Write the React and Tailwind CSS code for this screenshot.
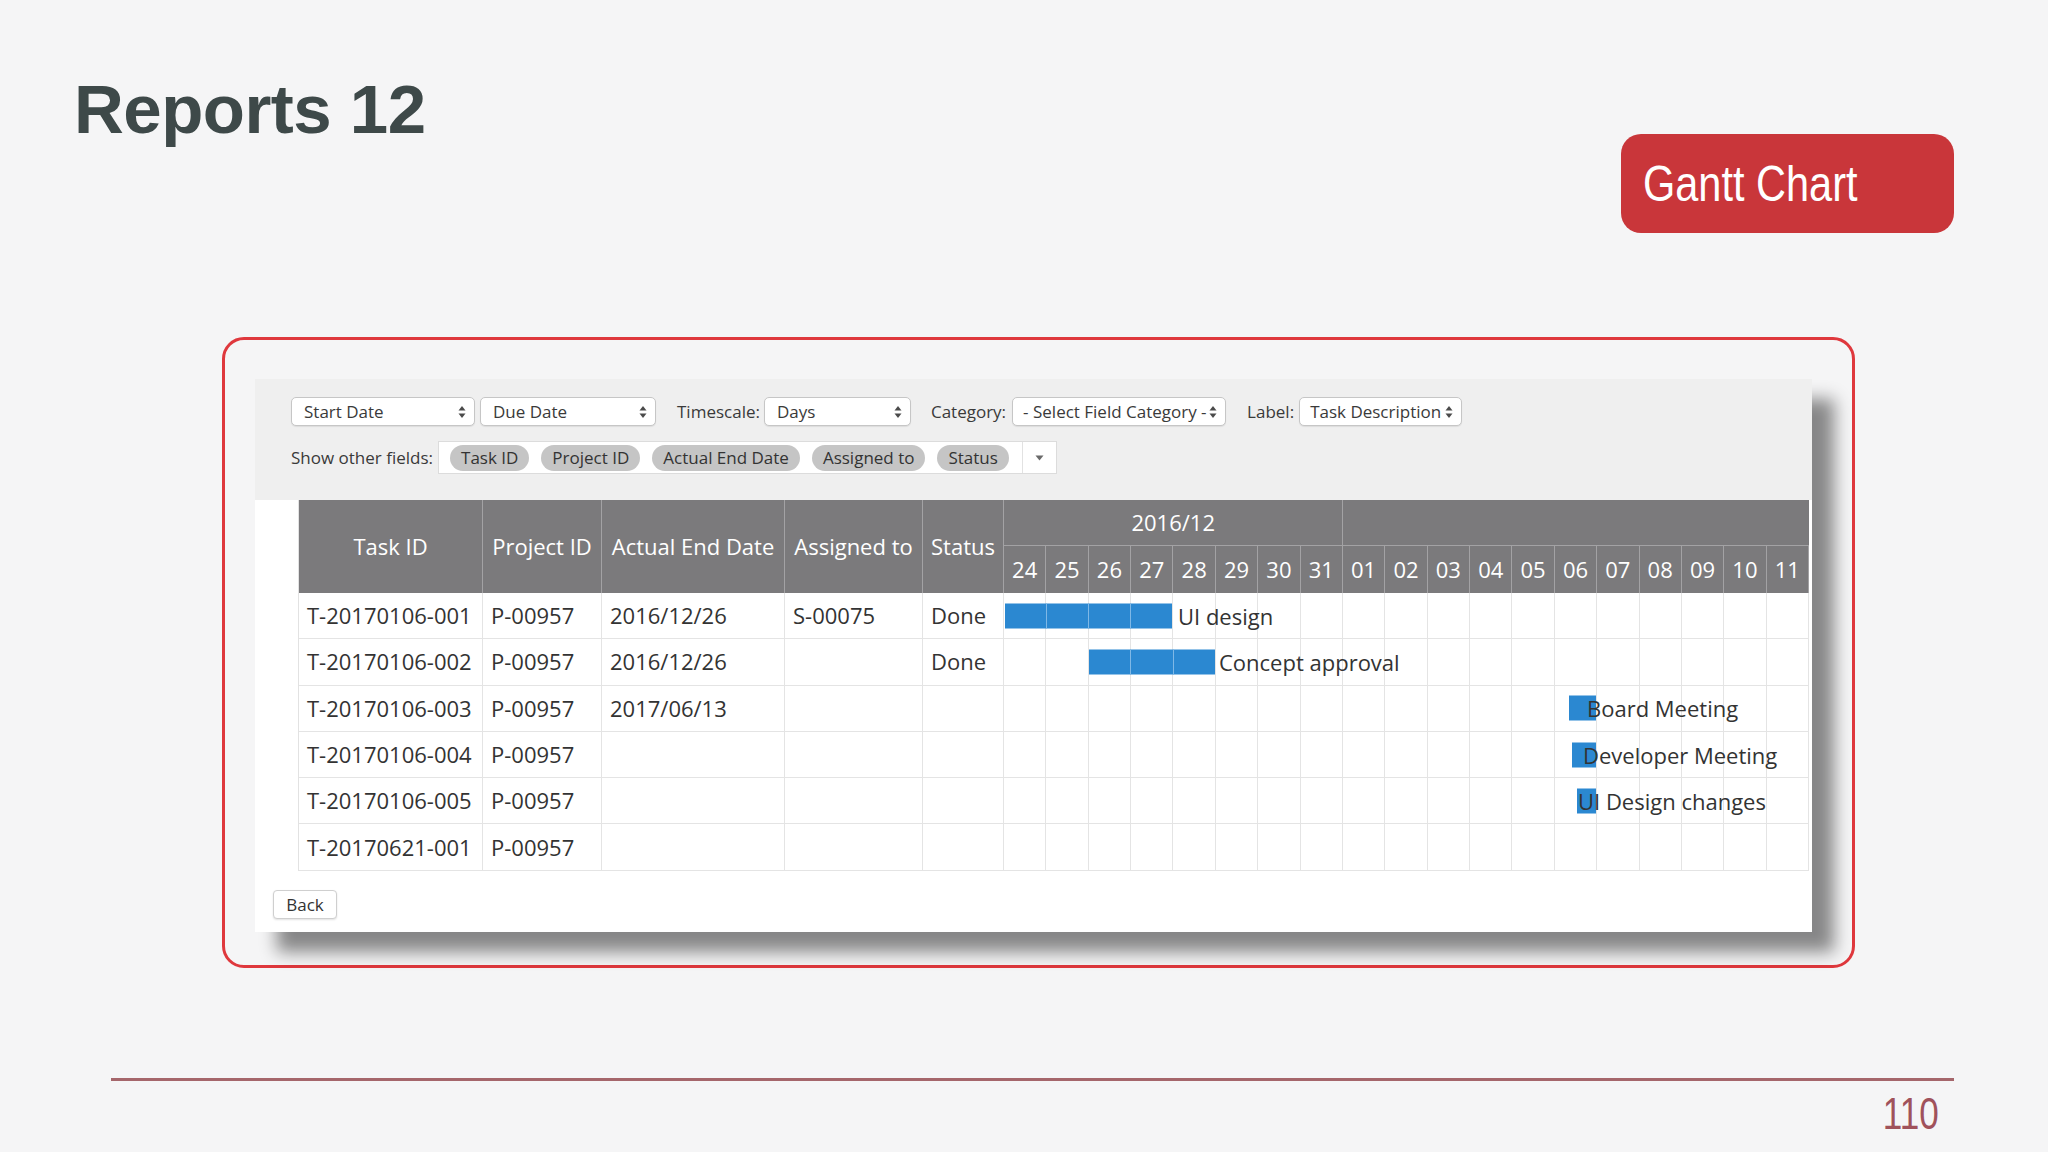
import React from "react";

const days = ["24", "25", "26", "27", "28", "29", "30", "31", "01", "02", "03", "04", "05", "06", "07", "08", "09", "10", "11"];

const rows = [
  { task: "T-20170106-001", project: "P-00957", end: "2016/12/26", assigned: "S-00075", status: "Done", bar: { left: 1, width: 167, segs: 4 }, label: "UI design", labelLeft: 174 },
  { task: "T-20170106-002", project: "P-00957", end: "2016/12/26", assigned: "", status: "Done", bar: { left: 85, width: 126, segs: 3 }, label: "Concept approval", labelLeft: 215 },
  { task: "T-20170106-003", project: "P-00957", end: "2017/06/13", assigned: "", status: "", bar: { left: 565, width: 27, segs: 1 }, label: "Board Meeting", labelLeft: 583 },
  { task: "T-20170106-004", project: "P-00957", end: "", assigned: "", status: "", bar: { left: 568, width: 24, segs: 1 }, label: "Developer Meeting", labelLeft: 579 },
  { task: "T-20170106-005", project: "P-00957", end: "", assigned: "", status: "", bar: { left: 573, width: 19, segs: 1 }, label: "UI Design changes", labelLeft: 574 },
  { task: "T-20170621-001", project: "P-00957", end: "", assigned: "", status: "", bar: null },
];

const fields = ["Task ID", "Project ID", "Actual End Date", "Assigned to", "Status"];

const UpDown = () => (
  <svg width="8" height="14" viewBox="0 0 8 14" className="shrink-0">
    <path d="M4 1 L7.5 5.5 H0.5 Z" fill="#4a4a4a" />
    <path d="M4 13 L0.5 8.5 H7.5 Z" fill="#4a4a4a" />
  </svg>
);

const Select = ({ className, children }) => (
  <div className={`flex h-[29px] items-center justify-between rounded-[5px] border border-[#c6c6c6] bg-white pl-3 pr-[8px] shadow-[0_1px_1px_rgba(0,0,0,0.08)] ${className}`}>
    <span className="whitespace-nowrap">{children}</span>
    <UpDown />
  </div>
);

const Toolbar = () => (
  <div className="h-[121px] bg-[#efefef] pl-[36px] pt-[18px] text-[17px] text-[#3a3a3a]">
    <div className="flex items-center">
      <Select className="w-[184px]">Start Date</Select>
      <Select className="ml-[5px] w-[176px]">Due Date</Select>
      <span className="ml-[21px]">Timescale:</span>
      <Select className="ml-[4px] w-[147px]">Days</Select>
      <span className="ml-[20px]">Category:</span>
      <Select className="ml-[6px] w-[214px] pl-[10px]">- Select Field Category -</Select>
      <span className="ml-[21px]">Label:</span>
      <Select className="ml-[5px] w-[163px] pl-[10px]">Task Description</Select>
    </div>
    <div className="mt-[15px] flex items-center">
      <span>Show other fields:</span>
      <div className="ml-[5px] flex h-[33px] items-center border border-[#dcdcdc] bg-white pl-[11px]">
        <div className="flex items-center gap-[12px]">
          {fields.map((f) => (
            <span key={f} className="flex h-[26px] items-center rounded-full bg-[#c5c5c5] px-[11px] leading-none text-[#333]">
              {f}
            </span>
          ))}
        </div>
        <div className="ml-[13px] flex h-full w-[34px] items-center justify-center border-l border-[#e2e2e2]">
          <svg width="9" height="6" viewBox="0 0 9 6">
            <path d="M0.5 0.5 H8.5 L4.5 5.5 Z" fill="#6a6a6a" />
          </svg>
        </div>
      </div>
    </div>
  </div>
);

const colCls = ["w-[184px]", "w-[119px]", "w-[183px]", "w-[138px]", "w-[81px]"];
const heads = ["Task ID", "Project ID", "Actual End Date", "Assigned to", "Status"];

const GanttTable = () => (
  <div className="ml-[43px] w-[1511px] border-l border-[#e2e2e2] text-[22px]">
    {/* header */}
    <div className="flex h-[93px] bg-[#7b7a7c] text-white">
      {heads.map((h, i) => (
        <div key={h} className={`${colCls[i]} flex shrink-0 items-center justify-center whitespace-nowrap border-r border-[#a3a2a4]`}>
          {h}
        </div>
      ))}
      <div className="flex w-[806px] flex-col">
        <div className="flex h-[46px] border-b border-[#a3a2a4]">
          <div className="flex w-[339.4px] items-center justify-center border-r border-[#a3a2a4]">2016/12</div>
          <div className="flex-1" />
        </div>
        <div className="grid flex-1 grid-cols-[repeat(19,minmax(0,1fr))]">
          {days.map((d) => (
            <div key={d} className="flex items-center justify-center border-r border-[#a3a2a4]">
              {d}
            </div>
          ))}
        </div>
      </div>
    </div>
    {/* body */}
    {rows.map((r) => (
      <div key={r.task} className="flex h-[46.3px] border-b border-[#e4e4e4] text-[#333]">
        {[r.task, r.project, r.end, r.assigned, r.status].map((v, i) => (
          <div key={i} className={`${colCls[i]} flex shrink-0 items-center whitespace-nowrap border-r border-[#e4e4e4] px-2`}>
            {v}
          </div>
        ))}
        <div className="relative w-[806px]">
          <div className="grid h-full grid-cols-[repeat(19,minmax(0,1fr))]">
            {days.map((d) => (
              <div key={d} className="border-r border-[#e4e4e4]" />
            ))}
          </div>
          {r.bar && (
            <div
              className="absolute top-1/2 flex h-[25px] -translate-y-1/2 bg-[#2b88d1]"
              style={{ left: r.bar.left, width: r.bar.width }}
            >
              {Array.from({ length: r.bar.segs }).map((_, i) => (
                <div key={i} className={`flex-1 ${i < r.bar.segs - 1 ? "border-r border-[#7fb8e6]" : ""}`} />
              ))}
            </div>
          )}
          {r.bar && (
            <span className="absolute top-1/2 -translate-y-1/2 whitespace-nowrap" style={{ left: r.labelLeft }}>
              {r.label}
            </span>
          )}
        </div>
      </div>
    ))}
  </div>
);

export default function App() {
  return (
    <div className="h-[1152px] w-[2048px] overflow-hidden bg-[#f5f5f6]">
      {/* slide header */}
      <div className="flex items-start justify-between pl-[74px] pr-[94px] pt-[75px]">
        <h1 className="text-[69px] font-bold leading-none tracking-[-0.5px] text-[#3e4949] [font-family:'Liberation_Sans',Arial,sans-serif]">
          Reports 12
        </h1>
        <div className="mt-[59px] flex h-[99px] w-[333px] items-center rounded-[20px] bg-[#c9363a] pl-[22px]">
          <span className="inline-block origin-left scale-x-[0.83] whitespace-nowrap text-[50px] leading-none text-white [font-family:'Liberation_Sans',Arial,sans-serif]">
            Gantt Chart
          </span>
        </div>
      </div>

      {/* framed screenshot */}
      <div className="ml-[222px] mt-[104px] h-[631px] w-[1633px] rounded-[22px] border-[3px] border-[#df383d] pl-[30px] pt-[39px]">
        <div className="w-[1557px] bg-white shadow-[22px_20px_16px_rgba(0,0,0,0.45)] [font-family:'Open_Sans',sans-serif]">
          <Toolbar />
          <GanttTable />
          <div className="ml-[18px] mt-[19px] flex h-[29px] w-[64px] items-center justify-center rounded-[4px] border border-[#cfcfcf] bg-white text-[17px] text-[#333] shadow-[0_1px_2px_rgba(0,0,0,0.12)]">
            Back
          </div>
          <div className="h-[13px]" />
        </div>
      </div>

      {/* footer */}
      <div className="ml-[111px] mt-[110px] w-[1843px]">
        <div className="h-[3px] bg-[#a5666b]" />
        <div className="mt-[10px] flex justify-end pr-[15px]">
          <span className="inline-block origin-right scale-x-[0.78] text-[45px] leading-none text-[#a0525b] [font-family:'Liberation_Sans',Arial,sans-serif]">
            110
          </span>
        </div>
      </div>
    </div>
  );
}
